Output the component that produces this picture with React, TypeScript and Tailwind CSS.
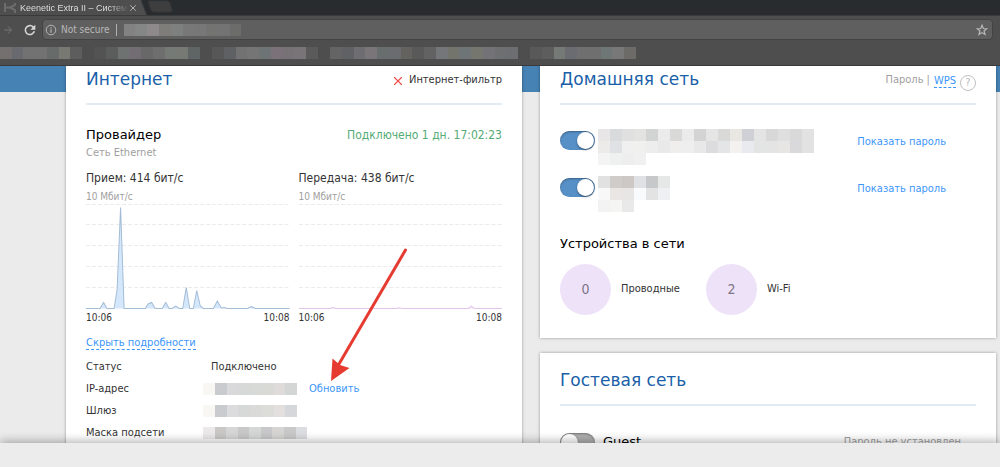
import { useState } from "react";
import { clsx } from "clsx";
import { ArrowRight, X } from "lucide-react";

const BOOKMARKS = [
  {
    width: "w-[82px]",
    colors: ["#747070", "#686a70", "#727272", "#727272", "#676b69", "#797974", "#5d5d5d"],
  },
  {
    width: "w-[106px]",
    colors: ["#535353", "#5a5d5b", "#6e7270", "#716d72", "#686868", "#6e6e6e", "#757a77", "#777a74", "#5f6464"],
  },
  {
    width: "w-[106px]",
    colors: ["#575757", "#5f6064", "#727272", "#757575", "#6e7374", "#7a7278", "#767276", "#787478", "#5a5a5a"],
  },
  {
    width: "w-[188px]",
    colors: [
      "#646464", "#5f6164", "#6e6e72", "#7a7578", "#686d6d", "#6b6c70", "#64625f", "#595959",
      "#626262", "#75767a", "#73746c", "#6f7477", "#75766e", "#737377", "#6e6f70", "#6c6e72",
    ],
  },
  {
    width: "w-[106px]",
    colors: ["#595959", "#5d5d5d", "#757a77", "#6a6c72", "#706f6f", "#6f6f6f", "#6f7676", "#787878", "#6d6b68"],
  },
];

const URL_CELLS = ["#828282", "#858786", "#8e8a8c", "#7f7d7a", "#7d807f", "#787878", "#777777", "#737472", "#737373", "#6c6c6a"];

const HOME_SSID = [
  ["#e8e6e7", "#d9dadc", "#e0e0e0", "#e3e3e1", "#d1d4d2", "#ebebeb", "#d9d9d7", "#ebebeb", "#d4d4d4", "#e5e5e5", "#d9dad8", "#e8e7e2", "#cfd0d5", "#e3e4e3", "#d8d8d8", "#dfdfdf", "#d9d9d9", "#e2e2e2"],
  ["#edebe9", "#dfe1e4", "#f0f0f0", "#f0f0ee", "#ededed", "#e9e9ea", "#efeeed", "#eeeeee", "#e8e8e8", "#dcdcdf", "#e4e5e7", "#f4f2f0", "#e8eaef", "#e3e4e4", "#e4e4e4", "#e8e6e4", "#d9d9db", "#e2e2e2"],
  ["#f4f4f4", "#eff1f0", "#eeeeee", "#f0f0f0"],
];

const SECOND_SSID = [
  ["#e1e1e1", "#cfccca", "#cdc8c6", "#e0e1e4", "#c7c8ca", "#e6e8e7"],
  ["#f8f8f8", "#e9e6e4", "#e8e6e5", "#f8fafc", "#e3e3e4", "#eff0f3"],
  ["#f3f3f3", "#f5f5f3", "#e9e9e9"],
];

const IP_CELLS = ["#f8f7f4", "#cacbcf", "#d9d9dc", "#d6d9d7", "#d8dad8", "#d9d9d6", "#dedbda", "#d3d6d4"];
const GATEWAY_CELLS = ["#f8f7f4", "#cacbcf", "#dcdcdf", "#d6d9d7", "#dadbd9", "#dcdcd9", "#e3dfdf", "#d6d7da"];
const MASK_CELLS = ["#ebe9e9", "#cac8c6", "#d5d6d5", "#c8c8c8", "#d5d7d7", "#c8c8ca", "#d6d5d3", "#c9c9c9", "#dcdde0"];

function PixelRow({ colors, className }: { colors: string[]; className?: string }) {
  return (
    <div className={clsx("flex h-3", className)} aria-hidden>
      {colors.map((color, i) => (
        <span key={i} className="min-w-0 flex-1" style={{ backgroundColor: color }} />
      ))}
    </div>
  );
}

function PixelBlock({ rows }: { rows: string[][] }) {
  return (
    <div className="min-w-0" aria-hidden>
      {rows.map((row, i) => (
        <div key={i} className="flex h-3">
          {row.map((color, j) => (
            <span key={j} className="w-3 shrink-0" style={{ backgroundColor: color }} />
          ))}
        </div>
      ))}
    </div>
  );
}

function BrowserBar() {
  return (
    <header className="shrink-0 bg-[#4e4e4e] font-['DejaVu_Sans_Condensed',sans-serif]">
      <div className="flex h-4 items-stretch overflow-hidden border-b border-[#3a3a3a] bg-[#282c2f]">
        <div className="flex w-[138px] items-center bg-[#4e4e4e] pl-1">
          <svg className="h-3 w-3 shrink-0" viewBox="0 0 12 12" fill="none" stroke="#6c6c6c" strokeWidth="2">
            <path d="M1 1v9M11 1v2L6 5.500H1M6 5.500l5 2.500v3" />
          </svg>
          <span className="ml-1 bg-linear-to-r from-[#e8e8e8] from-85% to-[#5a5a5a] bg-clip-text font-['Liberation_Sans',sans-serif] text-[9px] leading-3 whitespace-nowrap text-transparent">
            Keenetic Extra II – Систем
          </span>
          <button aria-label="Закрыть вкладку" className="ml-auto shrink-0">
            <X className="size-2.5 text-[#c4c4c4]" />
          </button>
        </div>
        <svg className="h-4 w-10" viewBox="0 0 40 16">
          <path d="M0 0h3l6 16H0z" fill="#4e4e4e" />
          <path d="M3 0l6 16" stroke="#3a3c3e" />
          <path d="M10 1h19c1.500 0 2.500 1 3 2l2 7c.5 1.500-.5 2-1.500 2H16c-1.500 0-2.500-1-3-2z" fill="#3e3e3e" stroke="#34373a" />
        </svg>
      </div>

      <div className="flex items-center gap-2 pt-[3px] pr-[7px]">
        <button aria-label="Вперёд" className="ml-0.5">
          <ArrowRight className="size-3 text-[#757575]" strokeWidth={2} />
        </button>
        <button aria-label="Обновить страницу">
          <svg className="size-4" viewBox="0 0 24 24" fill="#d6d6d6">
            <path d="M17.650 6.350A8 8 0 1 0 19.730 14h-2.600A5.600 5.600 0 1 1 15.800 8.200L12.500 11.500H20V4z" />
          </svg>
        </button>
        <div className="-ml-1 flex h-[21px] flex-1 items-center rounded-sm border border-[#434343] bg-[#5f5f5f] px-0.5">
          <svg className="size-3" viewBox="0 0 12 12" fill="none" stroke="#b4b4b4">
            <circle cx="6" cy="6" r="4.800" />
            <path d="M6 5.300v3.400M6 3.200v1.200" strokeWidth="1.200" />
          </svg>
          <span className="ml-1 text-[10px] text-[#b8b8b8]">Not secure</span>
          <span className="ml-1.5 h-3 w-px bg-[#b0b0b0]" />
          <PixelRow colors={URL_CELLS} className="ml-[7px] w-[118px]" />
          <button aria-label="Добавить в закладки" className="mr-0.5 ml-auto">
            <svg className="size-3" viewBox="0 0 12 12" fill="none" stroke="#b8b8b8" strokeWidth="1.200">
              <path d="M6 1.300l1.300 3.200 3.500.3-2.700 2.200.9 3.500L6 8.600l-3 1.900.9-3.500L1.200 4.800l3.500-.3z" />
            </svg>
          </button>
        </div>
      </div>

      <nav className="flex gap-3 border-b border-[#3a3a3a] pt-[7px] pb-1.5" aria-label="Закладки">
        {BOOKMARKS.map((b, i) => (
          <PixelRow key={i} colors={b.colors} className={b.width} />
        ))}
      </nav>
    </header>
  );
}

function Graph({
  title,
  area,
  fill,
  stroke,
}: {
  title: string;
  area: string;
  fill: string;
  stroke: string;
}) {
  return (
    <div className="min-w-0 flex-1">
      <p className="text-[12px] leading-4">{title}</p>
      <p className="mt-1 text-[10px] leading-[14px] text-[#a0a0a0]">10 Мбит/с</p>
      <svg className="block h-[105px] w-full" viewBox="0 0 203 105" preserveAspectRatio="none">
        <path d="M0 .5h203M0 20.500h203M0 41.500h203M0 62.500h203M0 83.500h203" stroke="#ebebeb" strokeDasharray="4 2" />
        <path d={`${area}V104.500H0z`} fill={fill} />
        <path d={area} fill="none" stroke={stroke} />
      </svg>
      <div className="mt-[3px] flex justify-between text-[10px] leading-3">
        <span>10:06</span>
        <span>10:08</span>
      </div>
    </div>
  );
}

const RX_AREA =
  "M0 104.500H14L17.500 98.500L21 104.500H28L31 86L34.500 3.500L38 104.500H59L62 100L65.500 98.500L69 104.500H76L79.500 98.500L83 104.500H86L89.500 102L93 104.500H96.500L100 83.500L103.500 104.500H107L110.500 86.500L114 102L117 104.500H127L131 97L135 104L138 103.500L141 104.500H161L165 102.500L169 104.500H203";
const TX_AREA =
  "M0 104.500H31L34 103.500L37 104.500H97L100 103.800L103 104.500H169L172 102.200L175 104.500H203";

function Toggle({
  id,
  label,
  checked,
  onChange,
}: {
  id: string;
  label?: string;
  checked: boolean;
  onChange: (v: boolean) => void;
}) {
  return (
    <input
      id={id}
      type="checkbox"
      role="switch"
      aria-label={label}
      checked={checked}
      onChange={(e) => onChange(e.target.checked)}
      className="h-[19px] w-[35px] shrink-0 appearance-none rounded-full bg-[#b0b0b0] p-px shadow-[inset_0_1px_2px_rgba(0,0,0,0.35)] before:block before:size-[17px] before:rounded-full before:bg-white before:shadow-[0_1px_2px_rgba(0,0,0,0.45)] checked:bg-[#5790c7] checked:before:ml-4"
    />
  );
}

function CardTitle({ children, aside }: { children: string; aside?: React.ReactNode }) {
  return (
    <div className="box-content flex h-[25px] items-center justify-between border-b-2 border-[#e1ebf5] pb-3">
      <h2 className="font-['DejaVu_Sans',sans-serif] text-[17px] leading-6 text-[#1a5fa8]">{children}</h2>
      {aside}
    </div>
  );
}

function DetailRow({ label, children }: { label: string; children: React.ReactNode }) {
  return (
    <div className="flex h-[22px] items-center">
      <dt className="w-[117px] shrink-0">{label}</dt>
      <dd className="flex items-center">{children}</dd>
    </div>
  );
}

function InternetCard() {
  return (
    <section className="relative min-w-0 bg-white px-5 shadow-[0_0_3px_rgba(0,0,0,0.35)]">
      <CardTitle
        aside={
          <span className="mt-1 flex items-center gap-1 text-[11px]">
            <X className="size-3.5 text-[#f4504a]" strokeWidth={2} />
            Интернет-фильтр
          </span>
        }
      >
        Интернет
      </CardTitle>

      <div className="mt-5 flex items-center justify-between">
        <h3 className="font-['DejaVu_Sans',sans-serif] text-[13px] leading-5 text-black">Провайдер</h3>
        <span className="text-[12px] leading-4 text-[#54ab75]">Подключено 1 дн. 17:02:23</span>
      </div>
      <p className="text-[11px] leading-4 text-[#a0a0a0]">Сеть Ethernet</p>

      <div className="mt-[9px] flex gap-[9px]">
        <Graph title="Прием: 414 бит/с" area={RX_AREA} fill="#d5e8fb" stroke="#a3bcd6" />
        <Graph title="Передача: 438 бит/с" area={TX_AREA} fill="#f6e6f8" stroke="#e3c4ea" />
      </div>

      <button className="mt-3 block border-b border-dashed border-[#3c96fa] text-[11px] leading-[13px] text-[#3c96fa]">
        Скрыть подробности
      </button>

      <dl className="mt-1.5 text-[11px]">
        <DetailRow label="Статус">
          <span className="ml-2">Подключено</span>
        </DetailRow>
        <DetailRow label="IP-адрес">
          <PixelRow colors={IP_CELLS} className="w-[94px]" />
          <button className="ml-3 text-[#3c96fa]">Обновить</button>
        </DetailRow>
        <DetailRow label="Шлюз">
          <PixelRow colors={GATEWAY_CELLS} className="w-[94px]" />
        </DetailRow>
        <DetailRow label="Маска подсети">
          <PixelRow colors={MASK_CELLS} className="w-[104px]" />
        </DetailRow>
      </dl>

      <svg
        className="pointer-events-none absolute top-[180px] left-[260px] h-[140px] w-[90px]"
        viewBox="0 0 90 140"
        aria-hidden
      >
        <path d="M79.500 4L13 118" stroke="#e63b30" strokeWidth="3" strokeLinecap="round" />
        <path d="M5 135L6.500 112.500L14 119L23.500 122z" fill="#e63b30" />
      </svg>
    </section>
  );
}

function DeviceCount({ count, label }: { count: number; label: string }) {
  return (
    <div className="flex w-[146px] items-center gap-2.5 text-[11px]">
      <span className="flex size-[51px] shrink-0 items-center justify-center rounded-full bg-[#eee2f9] text-[14px] text-[#7c7685]">
        {count}
      </span>
      {label}
    </div>
  );
}

function HomeNetworkCard() {
  const [main, setMain] = useState(true);
  const [second, setSecond] = useState(true);

  return (
    <section className="bg-white px-5 pb-[23px] shadow-[0_0_3px_rgba(0,0,0,0.35)]">
      <CardTitle
        aside={
          <span className="mt-1 flex items-center text-[11px] text-[#a0a0a0]">
            Пароль |
            <button className="ml-1 border-b border-dashed border-[#3c96fa] leading-[13px] text-[#3c96fa]">
              WPS
            </button>
            <button
              aria-label="Справка"
              className="mt-1 ml-1 flex size-4 items-center justify-center rounded-full border border-[#c0c0c0] text-[10px] leading-none text-[#b8b8b8]"
            >
              ?
            </button>
          </span>
        }
      >
        Домашняя сеть
      </CardTitle>

      <div className="mt-6 flex h-[47px] items-start gap-[3px]">
        <div className="pt-0.5">
          <Toggle id="wifi-main" label="Домашняя сеть 1" checked={main} onChange={setMain} />
        </div>
        <PixelBlock rows={HOME_SSID} />
        <button className="mt-[5px] mr-[30px] ml-auto shrink-0 text-[11px] leading-4 text-[#3c96fa]">
          Показать пароль
        </button>
      </div>
      <div className="flex h-[47px] items-start gap-[3px]">
        <div className="pt-0.5">
          <Toggle id="wifi-second" label="Домашняя сеть 2" checked={second} onChange={setSecond} />
        </div>
        <PixelBlock rows={SECOND_SSID} />
        <button className="mt-[5px] mr-[30px] ml-auto shrink-0 text-[11px] leading-4 text-[#3c96fa]">
          Показать пароль
        </button>
      </div>

      <h3 className="mt-[11px] font-['DejaVu_Sans',sans-serif] text-[13px] leading-5 text-black">
        Устройства в сети
      </h3>
      <div className="mt-2.5 flex">
        <DeviceCount count={0} label="Проводные" />
        <DeviceCount count={2} label="Wi-Fi" />
      </div>
    </section>
  );
}

function GuestNetworkCard() {
  const [guest, setGuest] = useState(false);

  return (
    <section className="bg-white px-5 pt-[14px] pb-10 shadow-[0_0_3px_rgba(0,0,0,0.35)]">
      <CardTitle>Гостевая сеть</CardTitle>
      <div className="mt-[26px] flex items-center">
        <Toggle id="wifi-guest" checked={guest} onChange={setGuest} />
        <label htmlFor="wifi-guest" className="ml-2 font-['DejaVu_Sans',sans-serif] text-[13px] leading-5 text-black">
          Guest
        </label>
        <span className="mr-[15px] ml-auto text-[11px] text-[#a0a0a0]">Пароль не установлен</span>
      </div>
    </section>
  );
}

export default function App() {
  return (
    <div className="flex h-screen flex-col bg-[#ebebeb] font-['DejaVu_Sans_Condensed','Noto_Sans',sans-serif] text-[#333]">
      <BrowserBar />

      <main className="min-h-0 flex-1 overflow-hidden">
        <div className="h-[26px] bg-[#4682b4]" />
        <div className="-mt-[26px] grid min-h-full grid-cols-2 gap-[18px] pr-1 pl-[66px]">
          <InternetCard />
          <div className="flex min-w-0 flex-col gap-[15px]">
            <HomeNetworkCard />
            <GuestNetworkCard />
          </div>
        </div>
      </main>

      <footer className="relative h-6 shrink-0 bg-[#ececec] shadow-[0_-2px_10px_rgba(0,0,0,0.3)]" />
    </div>
  );
}
